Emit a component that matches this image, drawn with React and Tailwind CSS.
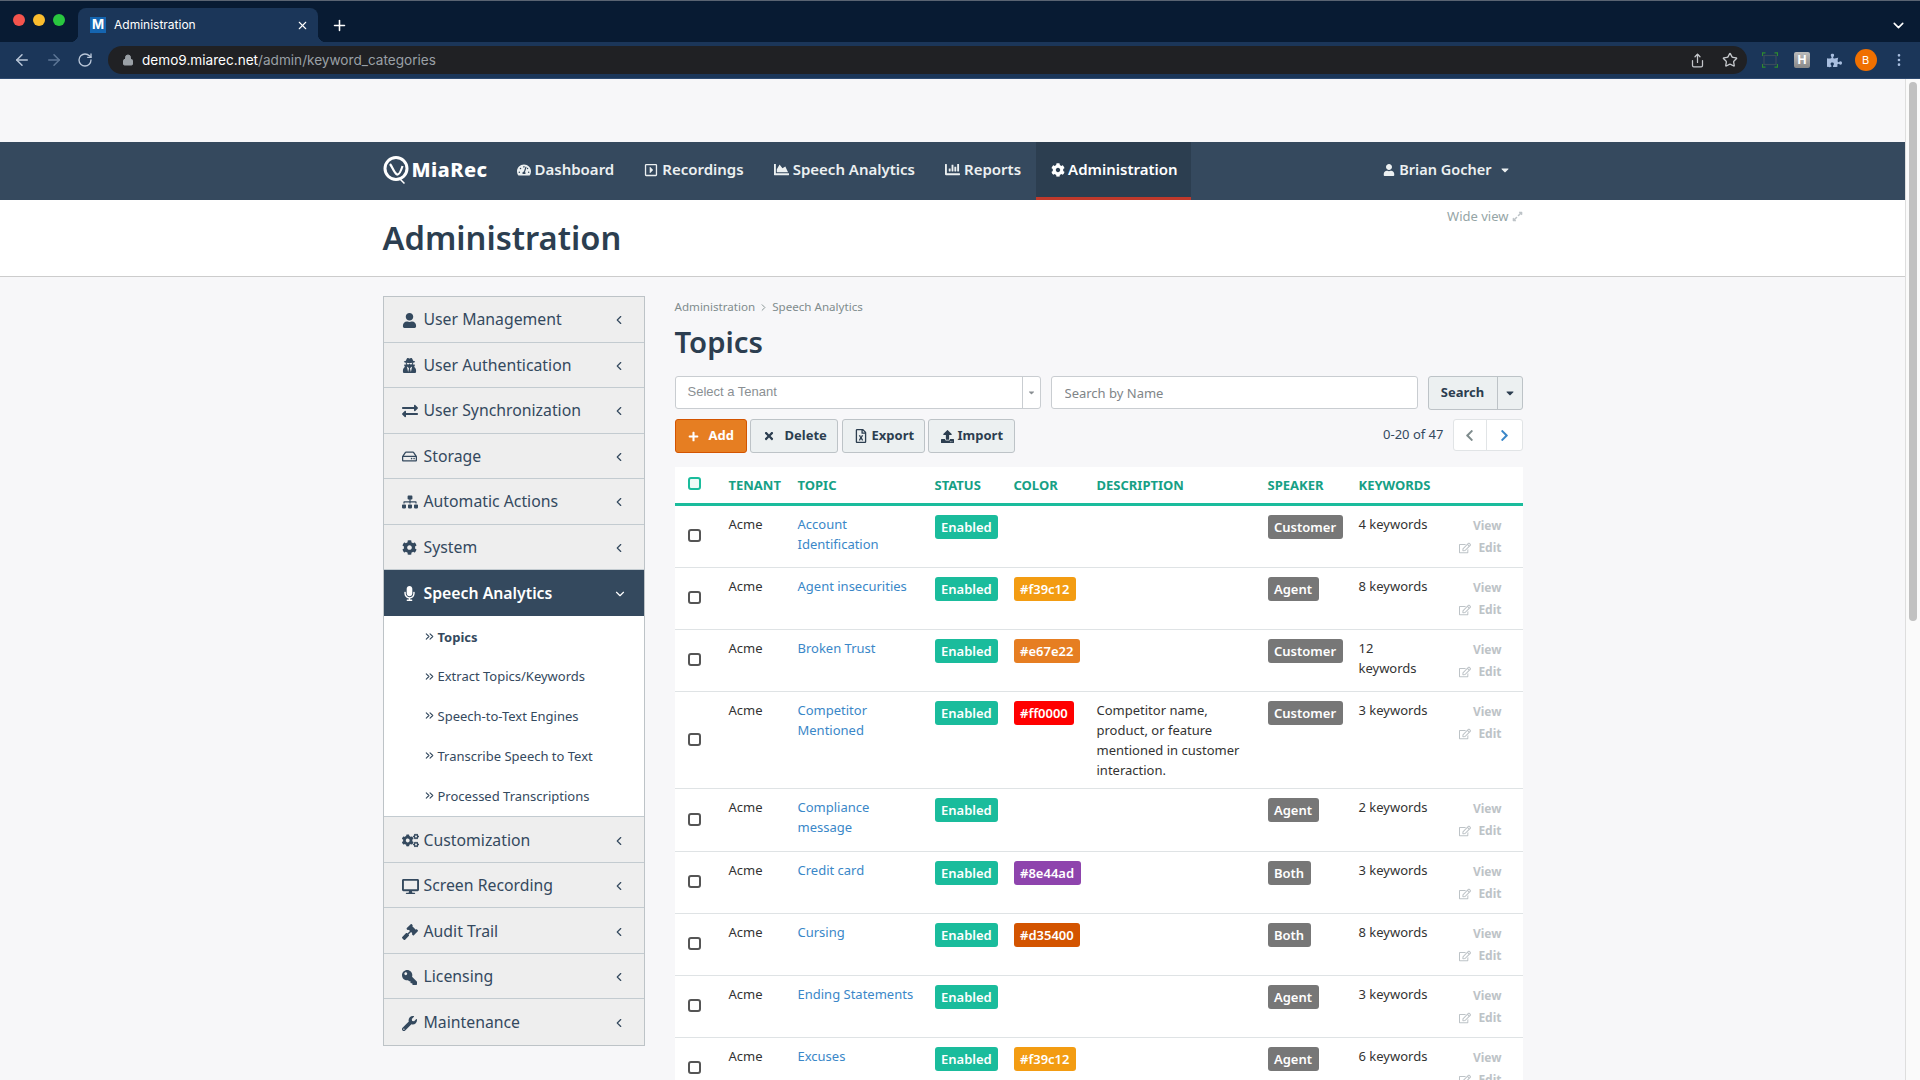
import React from "react";
import { ArrowLeft, ArrowRight, ChevronDown, ChevronLeft, ChevronRight, ChevronsRight, Lock, MoreVertical, Plus, RotateCw, Share, Star, X } from "lucide-react";
import {
  FaCaretDown, FaChartArea, FaChartBar, FaChevronLeft, FaChevronRight, FaCog, FaCogs, FaDesktop, FaExchangeAlt, FaExpandAlt, FaGavel, FaKey,
  FaMicrophone, FaPlus, FaPuzzlePiece, FaRegCaretSquareRight, FaRegEdit, FaRegFileExcel, FaRegHdd, FaSitemap, FaTachometerAlt, FaTimes, FaUpload,
  FaUser, FaUserSecret, FaWrench,
} from "react-icons/fa";

const menuTop = [
  { label: "User Management", icon: FaUser },
  { label: "User Authentication", icon: FaUserSecret },
  { label: "User Synchronization", icon: FaExchangeAlt, size: 16 },
  { label: "Storage", icon: FaRegHdd },
  { label: "Automatic Actions", icon: FaSitemap, size: 16 },
  { label: "System", icon: FaCog },
];

const menuBottom = [
  { label: "Customization", icon: FaCogs, size: 17 },
  { label: "Screen Recording", icon: FaDesktop, size: 17 },
  { label: "Audit Trail", icon: FaGavel, size: 16 },
  { label: "Licensing", icon: FaKey, iconClass: "-scale-x-100" },
  { label: "Maintenance", icon: FaWrench },
];

const subMenu = ["Topics", "Extract Topics/Keywords", "Speech-to-Text Engines", "Transcribe Speech to Text", "Processed Transcriptions"];

const rows = [
  { h: "h-[62px]", topic: "Account Identification", speaker: "Customer", keywords: "4 keywords" },
  { h: "h-[62px]", topic: "Agent insecurities", color: "#f39c12", bg: "bg-[#f39c12]", speaker: "Agent", keywords: "8 keywords" },
  { h: "h-[62px]", topic: "Broken Trust", color: "#e67e22", bg: "bg-[#e67e22]", speaker: "Customer", keywords: "12 keywords" },
  { h: "h-[97px]", topic: "Competitor Mentioned", color: "#ff0000", bg: "bg-[#ff0000]", desc: "Competitor name, product, or feature mentioned in customer interaction.", speaker: "Customer", keywords: "3 keywords" },
  { h: "h-[63px]", topic: "Compliance message", speaker: "Agent", keywords: "2 keywords" },
  { h: "h-[62px]", topic: "Credit card", color: "#8e44ad", bg: "bg-[#8e44ad]", speaker: "Both", keywords: "3 keywords" },
  { h: "h-[62px]", topic: "Cursing", color: "#d35400", bg: "bg-[#d35400]", speaker: "Both", keywords: "8 keywords" },
  { h: "h-[62px]", topic: "Ending Statements", speaker: "Agent", keywords: "3 keywords" },
  { h: "h-[62px]", topic: "Excuses", color: "#f39c12", bg: "bg-[#f39c12]", speaker: "Agent", keywords: "6 keywords" },
];

function Badge({ className, children }) {
  return (
    <span className={`mt-[1px] inline-block h-6 rounded-[3px] px-[6.5px] text-[13px] font-semibold leading-6 text-white ${className}`}>
      {children}
    </span>
  );
}

function Browser() {
  return (
    <div className="font-['Inter',sans-serif]">
      <div className="flex h-[42px] items-end border-t border-[#5a6472] bg-[#081b33]">
        <div className="flex h-full w-[78px] items-center gap-[8px] pb-[3px] pl-[13px]">
          <span className="h-3 w-3 rounded-full bg-[#f4544d]" />
          <span className="h-3 w-3 rounded-full bg-[#fbbd2e]" />
          <span className="h-3 w-3 rounded-full bg-[#29c73f]" />
        </div>
        <div className="relative flex h-[34px] w-[240px] items-center rounded-t-lg bg-[#1b3659] pl-3 pr-[9px] text-xs text-white">
          <span className="absolute bottom-0 -left-2 h-2 w-2 bg-[radial-gradient(circle_at_0_0,#081b33_8px,#1b3659_8.5px)]" />
          <span className="absolute bottom-0 -right-2 h-2 w-2 bg-[radial-gradient(circle_at_100%_0,#081b33_8px,#1b3659_8.5px)]" />
          <span className="flex h-4 w-4 items-center justify-center bg-[#1565b0] text-[13px] font-bold text-white">M</span>
          <span className="ml-2 flex-1">Administration</span>
          <X size={13} className="text-white" />
        </div>
        <Plus size={17} strokeWidth={2.2} className="mb-[8px] ml-[13px] text-white" />
        <ChevronDown size={17} strokeWidth={2.2} className="mb-[8px] ml-auto mr-[13px] text-white" />
      </div>
      <div className="flex h-[37px] items-center border-b border-[#2e4a70] bg-[#1b3659]">
        <div className="flex w-[108px] items-center gap-[14px] pl-[13px]">
          <ArrowLeft size={18} className="text-[#b9c6d8]" />
          <ArrowRight size={18} className="text-[#5d7696]" />
          <RotateCw size={16} className="text-[#b9c6d8]" />
        </div>
        <div className="flex h-7 w-[1639px] items-center rounded-full bg-[#202124] pl-[14px] pr-[9px]">
          <Lock size={12} fill="#9aa0a6" className="text-[#9aa0a6]" />
          <span className="ml-[8px] text-[13.6px] text-white">
            demo9.miarec.net<span className="text-[#9aa0a6]">/admin/keyword_categories</span>
          </span>
          <Share size={15} className="ml-auto text-[#c4c7cb]" />
          <Star size={16} className="ml-[17px] text-[#c4c7cb]" />
        </div>
        <svg width="16" height="16" viewBox="0 0 16 16" className="ml-[15px]" fill="none">
          <rect x="2" y="3.5" width="12" height="9" stroke="#3a4a5c" strokeWidth="1.2" />
          <path d="M0.5 4V0.8H3.5M12.5 0.8H15.5V4M15.5 12V15.2H12.5M3.5 15.2H0.5V12" stroke="#2e8b2e" strokeWidth="1.2" />
        </svg>
        <span className="ml-[16px] flex h-4 w-4 items-center justify-center rounded-[2px] bg-[linear-gradient(#bbb,#888)] text-[12px] font-bold text-white">H</span>
        <FaPuzzlePiece size={15} className="ml-[17px] text-[#a9bfe0]" />
        <span className="ml-[12.5px] flex h-[22px] w-[22px] items-center justify-center rounded-full bg-[#f07000] text-[11px] text-white">B</span>
        <MoreVertical size={16} className="ml-[14px] text-[#a9bfe0]" />
      </div>
    </div>
  );
}

function Logo() {
  return (
    <div className="mb-[3px] flex w-[119px] items-center">
      <svg width="27" height="30" viewBox="0 0 27 30" fill="none" className="mr-[2px]">
        <circle cx="13" cy="13.5" r="11" stroke="white" strokeWidth="3" />
        <path d="M7 9C9.5 12 11 18 14 19.5C16.5 20 18 16 19.5 11" stroke="white" strokeWidth="2.2" />
        <path d="M17 24L21.5 28.5" stroke="white" strokeWidth="1.5" />
      </svg>
      <span className="text-[20px] font-extrabold leading-none tracking-[0.4px] text-white">MiaRec</span>
    </div>
  );
}

function NavItem({ icon: Icon, label, active, size = 14 }) {
  return (
    <a className={`flex h-full items-center ${active ? "gap-[3px] border-b-[3px] border-[#c0392b] bg-[#2c3e50] pl-[15px] pr-[13px] text-white" : "gap-[4px] px-[15px] pb-[3px] text-[#ecf0f1]"}`}>
      <Icon size={size} />
      {label}
    </a>
  );
}

function Navbar() {
  return (
    <div className="h-[58px] bg-[#35495e]">
      <div className="mx-auto flex h-full w-[1140px] items-center text-[15px] font-semibold">
        <Logo />
        <NavItem icon={FaTachometerAlt} label="Dashboard" />
        <NavItem icon={FaRegCaretSquareRight} label="Recordings" />
        <NavItem icon={FaChartArea} label="Speech Analytics" size={15} />
        <NavItem icon={FaChartBar} label="Reports" size={15} />
        <NavItem icon={FaCog} label="Administration" active />
        <a className="ml-auto mb-[3px] mr-[12px] flex items-center gap-[4px] text-[14.5px] text-[#ecf0f1]">
          <FaUser size={12} />
          Brian Gocher
          <FaCaretDown size={12} className="ml-[3px]" />
        </a>
      </div>
    </div>
  );
}

function MenuItem({ icon: Icon, label, size = 15, iconClass = "" }) {
  return (
    <a className="flex h-[45.5px] items-center border-b border-[#c3cbd0] pl-[18px] pr-[18px] pt-[2px] text-[15.8px] text-[#34495e] last:border-b-0">
      <span className="w-[22px]"><Icon size={size} className={iconClass} /></span>
      <span className="flex-1">{label}</span>
      <ChevronLeft size={14} />
    </a>
  );
}

function Sidebar() {
  return (
    <div className="w-[262px] shrink-0 self-start border border-[#bdc3c7] bg-[#eeeeee]">
      {menuTop.map((m) => <MenuItem key={m.label} {...m} />)}
      <a className="flex h-[45.5px] items-center bg-[#34495e] pl-[18px] pr-[17px] pt-[2px] text-[15.8px] font-semibold text-white">
        <span className="w-[22px]"><FaMicrophone size={15} /></span>
        <span className="flex-1">Speech Analytics</span>
        <ChevronDown size={14} />
      </a>
      <div className="border-b border-[#c3cbd0] bg-white pl-[39px] pt-[2px] text-[13px] text-[#34495e]">
        {subMenu.map((s, i) => (
          <a key={s} className={`flex h-[39.8px] items-center gap-[2px] ${i === 0 ? "font-bold" : ""}`}>
            <ChevronsRight size={13} className="-mt-[2px]" />
            {s}
          </a>
        ))}
      </div>
      {menuBottom.map((m) => <MenuItem key={m.label} {...m} />)}
    </div>
  );
}

function ToolButton({ className, children }) {
  return (
    <button className={`flex h-[34px] items-center rounded-[3px] border border-[#bdc3c7] bg-[#ecf0f1] text-[13px] font-bold text-[#2c3e50] ${className}`}>
      {children}
    </button>
  );
}

function Toolbar() {
  return (
    <>
      <div className="flex h-[34px] items-start">
        <div className="flex h-[33px] w-[366px] rounded-[3px] border border-[#c9cdd1] bg-white font-['Liberation_Sans',sans-serif] text-[13px] text-[#8a8f93]">
          <span className="flex-1 pl-[12px] pt-[5px]">Select a Tenant</span>
          <span className="flex w-[18px] items-center justify-center border-l border-[#c9cdd1] text-[#8a8f93]"><FaCaretDown size={9} /></span>
        </div>
        <input readOnly placeholder="Search by Name" className="ml-[10px] h-[33px] w-[367px] rounded-[3px] border border-[#c9cdd1] bg-white pl-[13px] text-[13px] placeholder:text-[#7f8588]" />
        <div className="ml-[10px] flex h-[34px] w-[95px] rounded-[3px] border border-[#bdc3c7] bg-[#ecf0f1] text-[13px] font-bold text-[#2c3e50]">
          <span className="flex w-[69px] items-center justify-center border-r border-[#bdc3c7]">Search</span>
          <span className="flex flex-1 items-center justify-center"><FaCaretDown size={12} /></span>
        </div>
      </div>
      <div className="mt-[9px] flex items-start">
        <ToolButton className="w-[72px] !border-[#d35400] !bg-[#e67e22] pl-[12px] !text-white">
          <FaPlus size={11} />
          <span className="ml-[10px]">Add</span>
        </ToolButton>
        <ToolButton className="ml-[3px] w-[88px] pl-[12px]">
          <FaTimes size={12} />
          <span className="ml-[10px]">Delete</span>
        </ToolButton>
        <ToolButton className="ml-[4px] w-[83px] pl-[11px]">
          <FaRegFileExcel size={14} />
          <span className="ml-[4px]">Export</span>
        </ToolButton>
        <ToolButton className="ml-[3px] w-[87px] pl-[12px]">
          <FaUpload size={13} />
          <span className="ml-[4px]">Import</span>
        </ToolButton>
        <span className="ml-auto pt-[5px] text-[13px] leading-5 text-[#34495e]">0-20 of 47</span>
        <div className="ml-[9px] flex h-8 w-[70px] rounded-[3px] border border-[#e1e4e6] bg-white">
          <span className="flex w-[33px] items-center justify-center border-r border-[#e1e4e6] text-[#7f8c8d]"><FaChevronLeft size={13} /></span>
          <span className="flex flex-1 items-center justify-center text-[#3a87c8]"><FaChevronRight size={13} /></span>
        </div>
      </div>
    </>
  );
}

function TopicsTable() {
  return (
    <table className="mt-[14px] w-[848px] table-fixed border-separate border-spacing-0 bg-white text-[13px] leading-5 text-[#333]">
      <colgroup>
        <col className="w-[46px]" />
        <col className="w-[69px]" />
        <col className="w-[137px]" />
        <col className="w-[79px]" />
        <col className="w-[83px]" />
        <col className="w-[171px]" />
        <col className="w-[91px]" />
        <col className="w-[90px]" />
        <col className="w-[82px]" />
      </colgroup>
      <thead>
        <tr className="h-[39px] text-left text-[13px] font-bold uppercase text-[#16a085]">
          <th className="border-b-[3px] border-[#1abc9c] pb-[4px] pl-[13px] align-middle">
            <input type="checkbox" readOnly className="block h-[13px] w-[13px] appearance-none rounded-[3px] border-2 border-[#1abc9c] bg-[#eefaf7]" />
          </th>
          {["Tenant", "Topic", "Status", "Color", "Description", "Speaker", "Keywords"].map((h) => (
            <th key={h} className="border-b-[3px] border-[#1abc9c] pl-[8px] font-bold">{h}</th>
          ))}
          <th className="border-b-[3px] border-[#1abc9c]" />
        </tr>
      </thead>
      <tbody>
        {rows.map((r) => (
          <tr key={r.topic} className={r.h}>
            <td className="border-b border-[#dfe3e5] pb-[2px] pl-[13px] align-middle">
              <input type="checkbox" readOnly className="block h-[13px] w-[13px] appearance-none rounded-[3px] border-2 border-[#555]" />
            </td>
            <td className="border-b border-[#dfe3e5] p-2 align-top">Acme</td>
            <td className="border-b border-[#dfe3e5] p-2 align-top text-[#3a87c8]">{r.topic}</td>
            <td className="border-b border-[#dfe3e5] px-2 pt-2 align-top"><Badge className="bg-[#1abc9c]">Enabled</Badge></td>
            <td className="border-b border-[#dfe3e5] px-2 pt-2 align-top">
              {r.color && <Badge className={r.bg}>{r.color}</Badge>}
            </td>
            <td className="border-b border-[#dfe3e5] p-2 align-top">{r.desc}</td>
            <td className="border-b border-[#dfe3e5] px-2 pt-2 align-top"><Badge className="bg-[#777777]">{r.speaker}</Badge></td>
            <td className="border-b border-[#dfe3e5] p-2 align-top">{r.keywords}</td>
            <td className="border-b border-[#dfe3e5] pr-[21px] pt-[9px] align-top text-[12px] font-bold leading-[21px] text-[#bdc3c7]">
              <div className="text-right">View</div>
              <div className="mt-[1px] flex items-center justify-end gap-[7px]">
                <FaRegEdit size={12} />
                Edit
              </div>
            </td>
          </tr>
        ))}
      </tbody>
    </table>
  );
}

export default function App() {
  return (
    <div className="flex h-screen w-screen flex-col overflow-hidden bg-[#f7f7f9] font-['Noto_Sans',sans-serif]">
      <Browser />
      <div className="flex min-h-0 flex-1">
        <div className="min-w-0 flex-1 overflow-hidden">
          <div className="h-[63px]" />
          <Navbar />
          <div className="h-[77px] border-b border-[#cccccc] bg-white">
            <div className="relative mx-auto w-[1140px]">
              <h1 className="pt-[13px] text-[32.7px] font-semibold leading-[50px] text-[#2c3e50]">Administration</h1>
              <a className="absolute right-0 top-[7px] flex items-center gap-[3px] text-[13px] text-[#95a5a6]">
                Wide view
                <FaExpandAlt size={11} className="text-[#bdc3c7]" />
              </a>
            </div>
          </div>
          <div className="mx-auto flex w-[1140px] gap-[30px] pt-[19px]">
            <Sidebar />
            <div className="w-[848px] pt-[1px]">
              <div className="flex h-5 items-center text-[11.6px] text-[#7f8c8d]">
                Administration
                <ChevronRight size={11} className="mx-[3px]" />
                Speech Analytics
              </div>
              <h2 className="mb-[14px] mt-[5px] text-[29.3px] font-semibold leading-10 text-[#2c3e50]">Topics</h2>
              <Toolbar />
              <TopicsTable />
            </div>
          </div>
        </div>
        <div className="w-[15px] shrink-0 border-l border-[#dedede] bg-[#fafafa] pl-[3px] pt-[3px]">
          <div className="h-[539px] w-2 rounded-full bg-[#c1c1c1]" />
        </div>
      </div>
    </div>
  );
}
